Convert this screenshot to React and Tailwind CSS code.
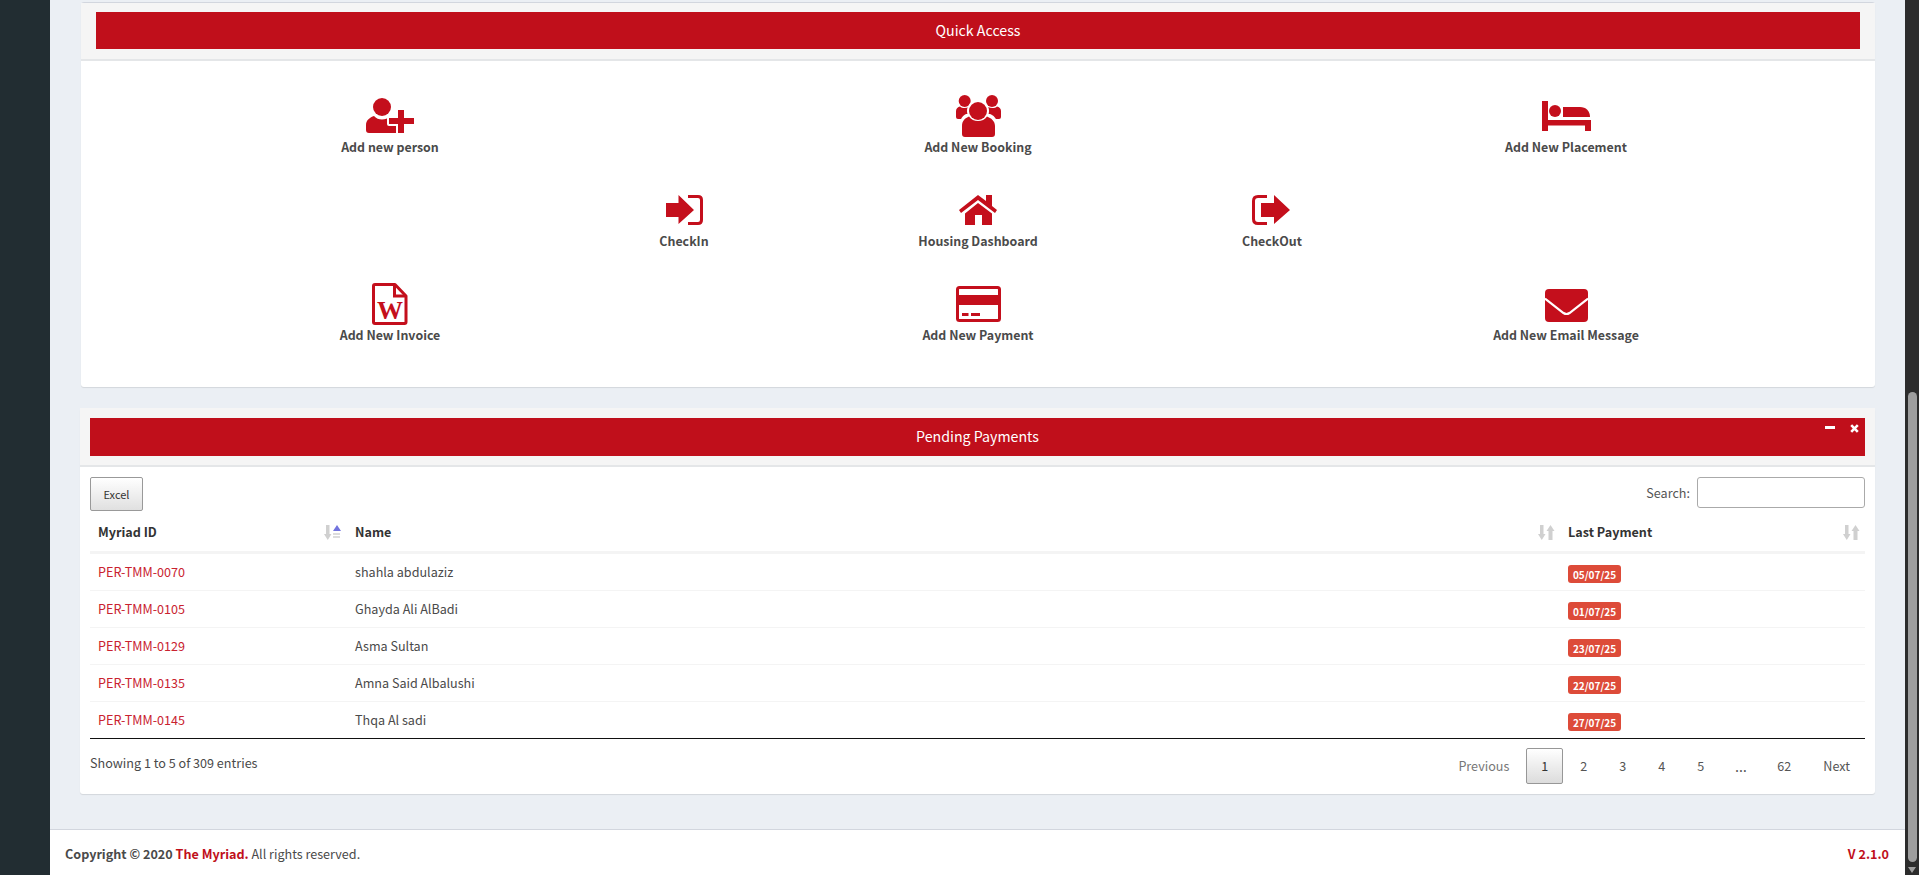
import React from "react";

const quickRows = [
  [
    { label: "Add new person", icon: <PersonIcon /> },
    { label: "Add New Booking", icon: <GroupIcon /> },
    { label: "Add New Placement", icon: <BedIcon /> },
  ],
  [
    { label: "CheckIn", icon: <CheckInIcon /> },
    { label: "Housing Dashboard", icon: <HouseIcon /> },
    { label: "CheckOut", icon: <CheckOutIcon /> },
  ],
  [
    { label: "Add New Invoice", icon: <FileIcon /> },
    { label: "Add New Payment", icon: <CardIcon /> },
    { label: "Add New Email Message", icon: <MailIcon /> },
  ],
];

const payments = [
  { id: "PER-TMM-0070", name: "shahla abdulaziz", date: "05/07/25" },
  { id: "PER-TMM-0105", name: "Ghayda Ali AlBadi", date: "01/07/25" },
  { id: "PER-TMM-0129", name: "Asma Sultan", date: "23/07/25" },
  { id: "PER-TMM-0135", name: "Amna Said Albalushi", date: "22/07/25" },
  { id: "PER-TMM-0145", name: "Thqa Al sadi", date: "27/07/25" },
];

const pages = ["2", "3", "4", "5"];

function PersonIcon() {
  return (
    <svg width="48" height="36" viewBox="0 0 48 36" fill="#c40f1c">
      <circle cx="16" cy="9" r="9" />
      <path d="M3 35 Q0 35 0 32 V27 C0 22 4 19.5 8 18 C10 20.5 13 21.5 16 21.5 C19 21.5 22 20.5 24 18 C28 19.5 32 22 32 27 V35 Z" />
      <rect x="21" y="18" width="12" height="10" fill="#fff" rx="2" />
      <rect x="30" y="10" width="10" height="25" fill="#fff" />
      <rect x="23" y="20" width="25" height="6" />
      <rect x="32" y="12" width="6" height="23" />
    </svg>
  );
}

function GroupIcon() {
  return (
    <svg width="45" height="42" viewBox="0 0 45 42" fill="#c40f1c">
      <circle cx="8.7" cy="6" r="6" />
      <circle cx="36" cy="6" r="6" />
      <path d="M0 22 V16 C0 13.5 2 12 4 11.5 C6 13.5 10 13.5 13 12 L14 24 H2 Q0 24 0 22 Z" />
      <path d="M45 22 V16 C45 13.5 43 12 41 11.5 C39 13.5 35 13.5 32 12 L31 24 H43 Q45 24 45 22 Z" />
      <circle cx="22" cy="16" r="11" fill="#fff" />
      <path d="M3 29 C5 22 8 20 10 19 H34 C37 20 41 23 41 29 V44 H3 Z" fill="#fff" />
      <circle cx="22" cy="16" r="9" />
      <path d="M9 42 Q6 42 6 39 V31 C6 26 9 23 13 21.5 C15 24.5 18.5 26 22 26 C25.5 26 29 24.5 31 21.5 C35 23 39 26 39 31 V39 Q39 42 36 42 Z" />
    </svg>
  );
}

function BedIcon() {
  return (
    <svg width="49" height="30" viewBox="0 0 49 30" fill="#c40f1c">
      <rect x="0" y="0" width="6" height="30" />
      <circle cx="13" cy="10" r="6" />
      <path d="M21 6 H38 C44 6 48 10 48 16 H21 Z" />
      <rect x="0" y="19" width="49" height="5.5" />
      <rect x="43" y="19" width="6" height="11" />
    </svg>
  );
}

function CheckInIcon() {
  return (
    <svg width="37" height="30" viewBox="0 0 37 30" fill="#c40f1c">
      <path d="M0 8 H12.5 V0 L28 15 L12.5 29 V22 H0 Z" />
      <path d="M22 1.5 H32 Q35.5 1.5 35.5 5 V25 Q35.5 28.5 32 28.5 H22" fill="none" stroke="#c40f1c" strokeWidth="3" />
    </svg>
  );
}

function HouseIcon() {
  return (
    <svg width="38" height="30" viewBox="0 0 38 30" fill="#c40f1c">
      <path d="M19 0 L27 6 V0 H33 V11 L38 15 L36 18 L19 5 L2 18 L0 15 Z" />
      <path d="M6 18.5 L19 8 L33 18.5 V30 H23 V20 H16 V30 H6 Z" />
    </svg>
  );
}

function CheckOutIcon() {
  return (
    <svg width="38" height="30" viewBox="0 0 38 30" fill="#c40f1c" className="-ml-[3px]">
      <path d="M15 1.5 H6 Q1.5 1.5 1.5 6 V24 Q1.5 28.5 6 28.5 H15" fill="none" stroke="#c40f1c" strokeWidth="3" />
      <path d="M9 8 H22 V0 L38 15 L22 29 V22 H9 Z" />
    </svg>
  );
}

function FileIcon() {
  return (
    <svg width="36" height="42" viewBox="0 0 36 42">
      <path d="M3 1.5 H23 L34 13 V39 Q34 40.5 32.5 40.5 H3 Q1.5 40.5 1.5 39 V3 Q1.5 1.5 3 1.5 Z" fill="#fff" stroke="#c40f1c" strokeWidth="3" strokeLinejoin="round" />
      <path d="M22.5 2 V13 H33.5" fill="none" stroke="#c40f1c" strokeWidth="3" />
      <text x="18" y="36" textAnchor="middle" fontSize="26" fontWeight="700" fill="#c40f1c" fontFamily="Liberation Serif, serif">W</text>
    </svg>
  );
}

function CardIcon() {
  return (
    <svg width="45" height="36" viewBox="0 0 45 36" fill="#c40f1c">
      <rect x="1.5" y="1.5" width="42" height="33" rx="2" fill="#fff" stroke="#c40f1c" strokeWidth="3" />
      <rect x="1" y="9" width="43" height="10" />
      <rect x="6" y="27" width="6.5" height="3" />
      <rect x="15" y="27" width="9" height="3" />
    </svg>
  );
}

function MailIcon() {
  return (
    <svg width="43" height="33" viewBox="0 0 43 33" fill="#c40f1c" className="mt-[2px]">
      <rect x="0" y="0" width="43" height="33" rx="4" />
      <path d="M0 9.5 L18.5 24 Q21.5 26 24.5 24 L43 9.5" fill="none" stroke="#fff" strokeWidth="2.2" />
    </svg>
  );
}

function SortIcon({ active }) {
  return (
    <svg width="17" height="15" viewBox="0 0 17 15" className="shrink-0">
      <path d="M2 0 H5.5 V9 H7.5 L3.75 15 L0 9 H2 Z" fill="#d0d0d0" />
      {active ? (
        <>
          <path d="M13 0 L17 6 H9 Z" fill="#7274de" />
          <rect x="9" y="8" width="7" height="2" fill="#dcdcdc" />
          <rect x="9" y="11" width="7" height="2" fill="#dcdcdc" />
        </>
      ) : (
        <path d="M12.5 0 L16.5 6 H14.5 V15 H10.5 V6 H8.5 Z" fill="#d0d0d0" />
      )}
    </svg>
  );
}

function QuickItem({ label, icon }) {
  return (
    <div className="flex flex-col items-center">
      <div className="h-[42px] flex items-center justify-center">{icon}</div>
      <span className="text-[12.4px] leading-[20px] font-bold text-[#4a4a4a]">{label}</span>
    </div>
  );
}

export default function App() {
  return (
    <div className="flex h-screen w-full overflow-hidden bg-[#ebeff4] text-[12.6px] text-[#4a4a4a] [font-family:'Noto_Sans_CJK_SC','Noto_Sans',sans-serif]">
      {/* sidebar is collapsed, only the dark strip shows */}
      <div className="w-[50px] shrink-0 bg-[#222d32]" />

      <div className="flex-1 min-w-0 flex flex-col">
        <div className="flex-1 pt-[2px] pl-[30px] pr-[30px]">
          {/* Quick Access */}
          <div className="h-[385px] bg-white rounded-[3px] border-t border-[#d2d6de] ml-px shadow-[0_1px_1px_rgba(0,0,0,0.1)]">
            <div className="h-[58px] bg-[#f5f5f5] border-b-2 border-[#e4e6e8] px-[15px] pt-[9px]">
              <div className="h-[37px] bg-[#c00f1b] flex items-center justify-center text-white text-[14.2px]">
                Quick Access
              </div>
            </div>
            <div className="pt-[34px] flex flex-col gap-[32px]">
              <div className="grid grid-cols-[588px_588px_588px] justify-center">
                {quickRows[0].map((q) => (
                  <QuickItem key={q.label} {...q} />
                ))}
              </div>
              <div className="grid grid-cols-[294px_294px_294px] justify-center">
                {quickRows[1].map((q) => (
                  <QuickItem key={q.label} {...q} />
                ))}
              </div>
              <div className="grid grid-cols-[588px_588px_588px] justify-center">
                {quickRows[2].map((q) => (
                  <QuickItem key={q.label} {...q} />
                ))}
              </div>
            </div>
          </div>

          {/* Pending Payments */}
          <div className="mt-[21px] h-[386px] bg-white rounded-[3px] shadow-[0_1px_1px_rgba(0,0,0,0.1)]">
            <div className="relative h-[59px] bg-[#f5f5f5] border-b-2 border-[#e4e6e8] px-[10px] pt-[10px]">
              <div className="h-[38px] bg-[#c00f1b] flex items-center justify-center text-white text-[14.2px]">
                Pending Payments
              </div>
              <div className="absolute left-[1745px] top-[18px] w-[10px] h-[3px] bg-white" />
              <svg className="absolute left-[1770px] top-[16px]" width="9" height="9" viewBox="0 0 9 9">
                <path d="M1.2 1.2 L7.8 7.8 M7.8 1.2 L1.2 7.8" stroke="#fff" strokeWidth="2.6" />
              </svg>
            </div>

            <div className="px-[10px] pt-[10px]">
              <div className="flex justify-between items-start h-[34px]">
                <button className="w-[53px] h-[34px] border border-[#999] rounded-[2px] bg-gradient-to-b from-white to-[#e0e0e0] text-[11px] text-[#333]">
                  Excel
                </button>
                <label className="flex items-center gap-[7px] text-[#555]">
                  <span className="pt-[2px]">Search:</span>
                  <input className="w-[168px] h-[31px] border border-[#aaa] rounded-[3px] bg-white" />
                </label>
              </div>

              <div className="h-[43px] pt-[3px] border-b-[3px] border-[#f4f4f4] grid grid-cols-[257px_1213px_305px] items-center font-bold text-[#333]">
                <div className="flex items-center justify-between pl-2 pr-[6px]">
                  Myriad ID
                  <SortIcon active />
                </div>
                <div className="flex items-center justify-between pl-2 pr-[5px]">
                  Name
                  <SortIcon />
                </div>
                <div className="flex items-center justify-between pl-2 pr-[5px]">
                  Last Payment
                  <SortIcon />
                </div>
              </div>

              <div className="border-b border-[#111]">
                {payments.map((p, i) => (
                  <div
                    key={p.id}
                    className={i < 4 ? "h-[37px] grid grid-cols-[257px_1213px_305px] items-center border-b border-[#f4f4f4]" : "h-[36px] grid grid-cols-[257px_1213px_305px] items-center"}
                  >
                    <a className="pl-2 text-[#c9222f]">{p.id}</a>
                    <span className="pl-2">{p.name}</span>
                    <div className="pl-2 pt-[4px]">
                      <span className="flex items-center justify-center w-[53px] h-[18px] rounded-[3px] bg-[#dd4b39] text-white text-[10px] font-bold">
                        {p.date}
                      </span>
                    </div>
                  </div>
                ))}
              </div>

              <div className="flex justify-between items-start pt-[9px]">
                <span className="pt-[6px]">Showing 1 to 5 of 309 entries</span>
                <div className="flex items-center text-[#555]">
                  <span className="px-[15px] h-[36px] leading-[36px] ml-[2px] text-[#777]">Previous</span>
                  <span className="w-[37px] h-[36px] ml-[2px] flex items-center justify-center border border-[#979797] rounded-[2px] bg-gradient-to-b from-white to-[#dcdcdc] text-[#333]">
                    1
                  </span>
                  {pages.map((p) => (
                    <span key={p} className="px-[15px] h-[36px] leading-[36px] ml-[2px]">
                      {p}
                    </span>
                  ))}
                  <span className="w-[39px] h-[36px] leading-[36px] ml-[2px] text-center text-[15px] [font-family:'Noto_Sans',sans-serif]">…</span>
                  <span className="px-[15px] h-[36px] leading-[36px] ml-[2px]">62</span>
                  <span className="px-[15px] h-[36px] leading-[36px] ml-[2px]">Next</span>
                </div>
              </div>
            </div>
          </div>
        </div>

        <footer className="h-[46px] shrink-0 pt-[3px] bg-white border-t border-[#d2d6de] flex items-center justify-between pl-[15px] pr-[16px]">
          <span>
            <b>Copyright © 2020 </b>
            <b className="text-[#c00f1b]">The Myriad.</b> All rights reserved.
          </span>
          <b className="text-[#c00f1b]">V 2.1.0</b>
        </footer>
      </div>

      {/* fake browser scrollbar, the page in the shot is scrolled to the bottom */}
      <div className="w-[14px] shrink-0 bg-[#2c2c2c] flex flex-col items-center pt-[392px] pb-[2px]">
        <div className="w-[9px] h-[470px] rounded-[5px] bg-[#9e9e9e]" />
        <div className="mt-auto w-0 h-0 border-x-[4px] border-x-transparent border-t-[6px] border-t-[#9e9e9e]" />
      </div>
    </div>
  );
}
